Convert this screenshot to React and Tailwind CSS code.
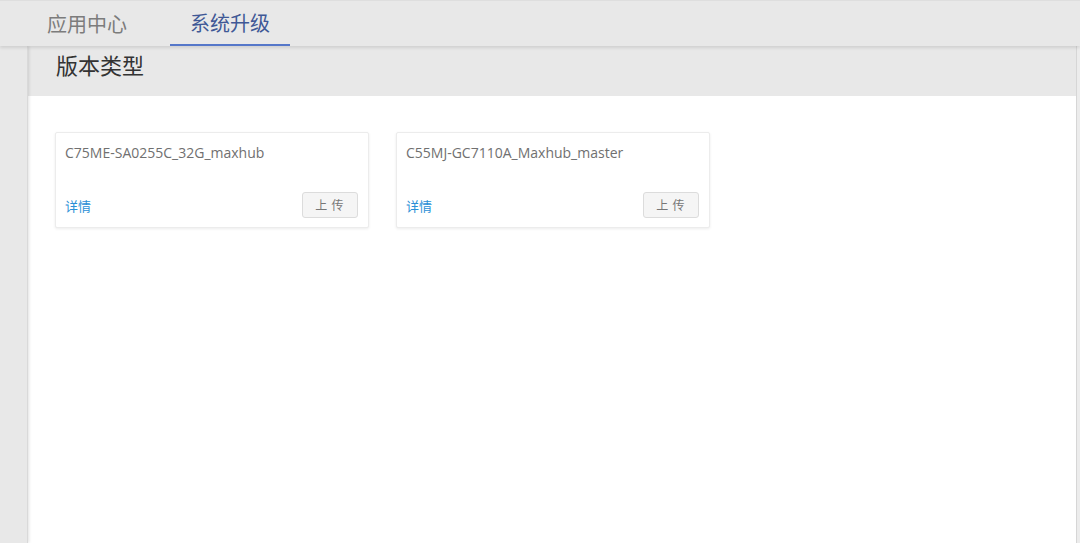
import React from 'react';

const versions = [
  { id: 1, name: 'C75ME-SA0255C_32G_maxhub' },
  { id: 2, name: 'C55MJ-GC7110A_Maxhub_master' },
];

const font = { fontFamily: '"Open Sans", "Noto Sans CJK SC", sans-serif' };

const VersionCard = ({ name }) => (
  <div className="w-[314px] h-[96px] bg-white border border-[#ececec] rounded-[2px] shadow-[0_1px_3px_rgba(0,0,0,0.08)] pl-[9px] pr-[10px] pt-[10px] pb-[9px] flex flex-col justify-between">
    <div className="text-[14px] text-[#707070] leading-5">{name}</div>
    <div className="flex items-center justify-between">
      <a className="text-[13px] text-[#2b8fd6] cursor-pointer mt-[4px]">详情</a>
      <button className="w-[56px] h-[26px] text-[12px] tracking-[0.35em] pl-[3px] pt-[2px] text-[#777] bg-[#f5f5f5] border border-[#dcdcdc] rounded-[3px]">
        上传
      </button>
    </div>
  </div>
);

export default function App() {
  return (
    <div className="w-[1080px] h-[543px] overflow-hidden bg-[#e8e8e8] flex flex-col" style={font}>
      {/* tabs */}
      <div className="h-[46px] shrink-0 bg-[#e8e8e8] border-t border-[#dedede] shadow-[0_2px_3px_rgba(0,0,0,0.1)] relative z-10 flex items-end pl-[47px]">
        <div className="h-full flex items-center text-[20px] text-[#7c7c7c] pt-[2px]">应用中心</div>
        <div className="ml-[43px] h-full flex flex-col justify-end">
          <div className="flex-1 flex items-center justify-center px-[20px] text-[20px] text-[#3f5896] pt-[2px]">系统升级</div>
          <div className="h-[2px] bg-[#5577c9]" />
        </div>
      </div>

      <div className="flex-1 flex min-h-0">
        <div className="w-[28px] shrink-0 bg-[#e8e8e8] border-r border-[#d9d9d9] shadow-[1px_0_3px_rgba(0,0,0,0.12)] z-[1]" />
        <div className="flex-1 flex flex-col min-h-0">
          <div className="h-[50px] shrink-0 bg-[#e8e8e8] pl-[28px] pt-[3px] text-[22px] text-[#333]">版本类型</div>
          <div className="flex-1 bg-white pl-[27px] pt-[36px] flex gap-[27px] items-start">
            {versions.map(v => (
              <VersionCard key={v.id} name={v.name} />
            ))}
          </div>
        </div>
        <div className="w-[4px] shrink-0 bg-[#ececec] border-l border-[#d6d6d6]" />
      </div>
    </div>
  );
}
